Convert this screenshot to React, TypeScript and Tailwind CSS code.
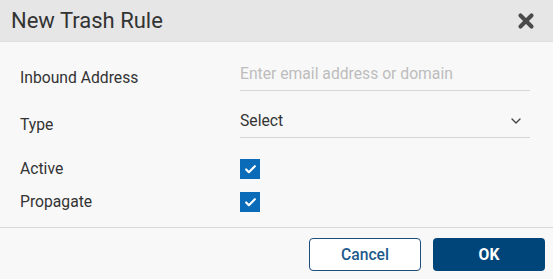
import { Check, ChevronDown, X } from "lucide-react"

const rows = ["Active", "Propagate"]

export default function App() {
  return (
    <div className="w-[553px] h-[279px] bg-[#f8f8f8] font-['Roboto',sans-serif] text-[#333]">
      <div className="h-[42px] bg-[#e6e6e6] flex items-center justify-between pl-[11px] pr-[16px] border-b border-[#dedede]">
        <h1 className="text-[22px] leading-none">New Trash Rule</h1>
        <X className="w-[22px] h-[22px] text-[#4a4a4a]" strokeWidth={4.5} />
      </div>

      <div className="pl-[20px] pr-[23px] pt-[15px] h-[185px]">
        <div className="flex items-end h-[34px]">
          <label className="w-[220px] text-[15.7px] pb-[1px]">Inbound Address</label>
          <input
            className="flex-1 h-[34px] bg-transparent border-b border-[#d6d6d6] text-[15.7px] outline-none placeholder:text-[#bdbdbd]"
            placeholder="Enter email address or domain"
          />
        </div>
        <div className="flex items-end h-[34px] mt-[13px]">
          <label className="w-[220px] text-[15.7px] pb-[1px]">Type</label>
          <div className="flex-1 h-[34px] border-b border-[#d6d6d6] flex items-center justify-between pt-[1px] pr-[6px]">
            <span className="text-[15.7px]">Select</span>
            <ChevronDown className="w-[16px] h-[16px] text-[#444]" strokeWidth={2} />
          </div>
        </div>
        <div className="mt-[21px] flex flex-col gap-[13px]">
          {rows.map(r => (
            <div key={r} className="flex items-center h-[20px]">
              <span className="w-[220px] text-[15.7px]">{r}</span>
              <span className="w-[20px] h-[20px] bg-[#0a6bb8] flex items-center justify-center">
                <Check className="w-[13px] h-[13px] text-white" strokeWidth={4} />
              </span>
            </div>
          ))}
        </div>
      </div>

      <div className="border-t border-[#d9d9d9] flex justify-end gap-[12px] pt-[10px] pr-[8px]">
        <button className="w-[112px] h-[33px] rounded-[4px] border border-[#1d4f7c] text-[#1d5a8c] text-[15.7px] font-medium bg-white">
          Cancel
        </button>
        <button className="w-[112px] h-[33px] rounded-[4px] bg-[#00457a] text-white text-[15.7px] font-bold">
          OK
        </button>
      </div>
    </div>
  )
}
